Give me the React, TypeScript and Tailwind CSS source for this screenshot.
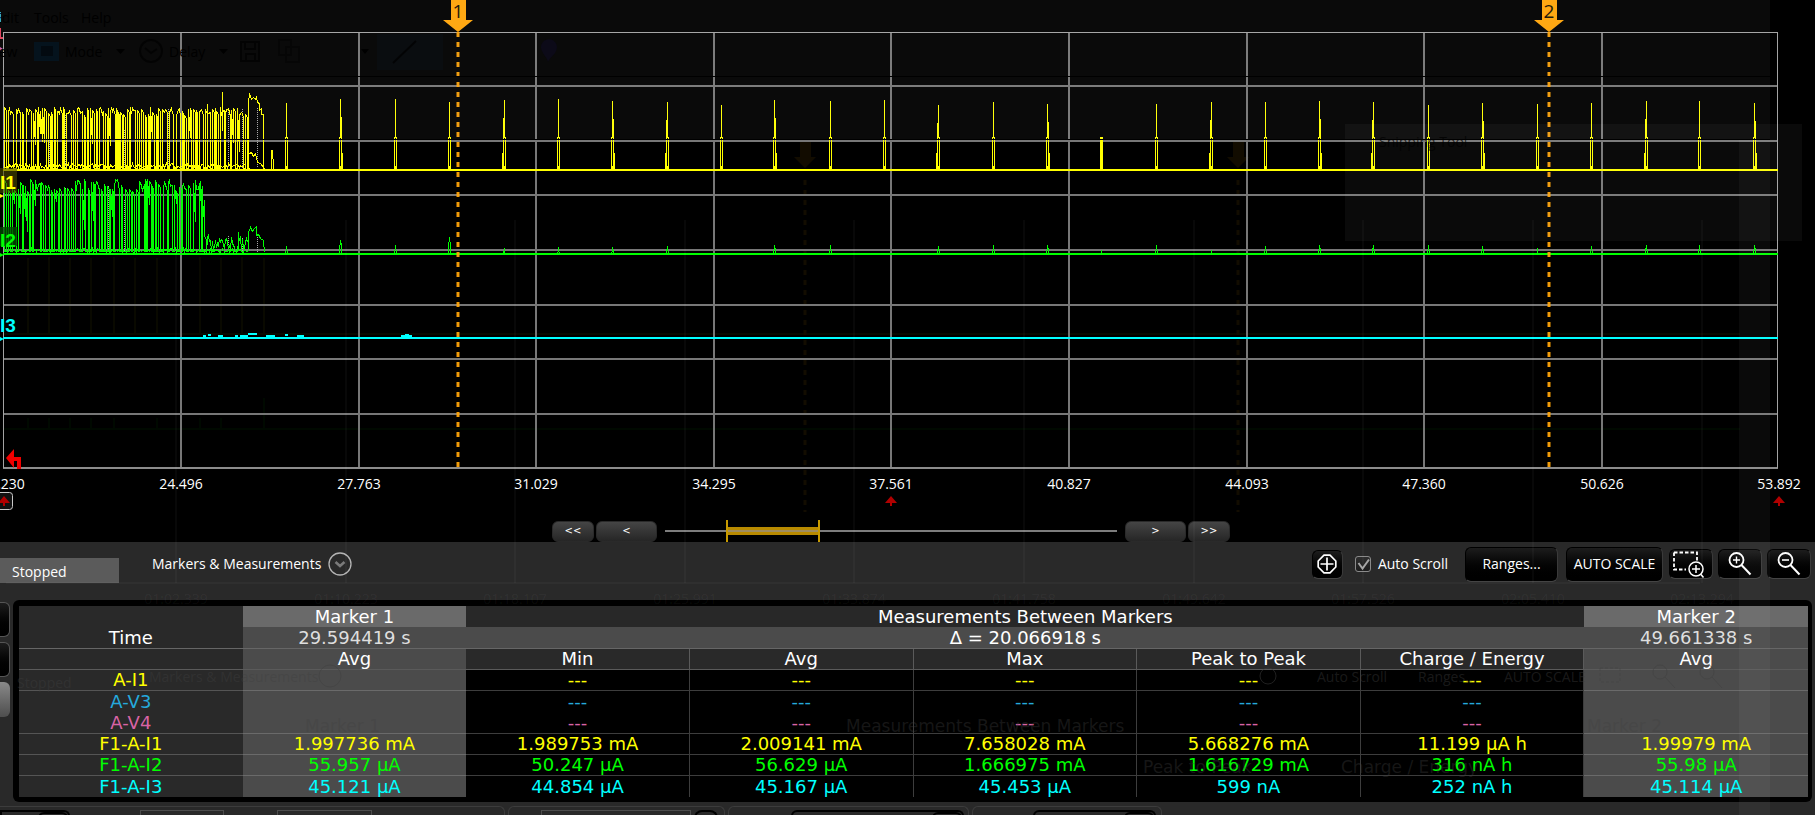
import type { ReactNode } from "react";

const AXIS = [
  [3, "21.230"],
  [181, "24.496"],
  [359, "27.763"],
  [536, "31.029"],
  [714, "34.295"],
  [891, "37.561"],
  [1069, "40.827"],
  [1247, "44.093"],
  [1424, "47.360"],
  [1602, "50.626"],
  [1779, "53.892"],
] as const;

const ROWS_Y = [86, 141, 195, 250, 305, 359, 414];

// x, top of the I1 spike, top of the I2 spike, side of the extra shoulder
const PULSES = [
  [286, 102, 245, 0],
  [340, 98, 239, 1],
  [395, 98, 244, 0],
  [449, 101, 236, 0],
  [504, 99, 247, -1],
  [558, 98, 246, 0],
  [612, 100, 246, 1],
  [667, 101, 245, -1],
  [721, 104, 252, 0],
  [774, 99, 244, 1],
  [830, 100, 244, 0],
  [884, 99, 252, 0],
  [938, 104, 245, -1],
  [993, 101, 244, 0],
  [1047, 103, 244, 1],
  [1101, 136, 249, 0],
  [1156, 103, 244, 0],
  [1211, 101, 249, -1],
  [1265, 101, 245, 0],
  [1319, 100, 244, 1],
  [1373, 101, 244, -1],
  [1428, 104, 244, 0],
  [1482, 102, 245, 1],
  [1537, 103, 247, 0],
  [1591, 102, 245, 0],
  [1646, 100, 244, -1],
  [1699, 100, 244, 0],
  [1754, 102, 244, 1],
];

function rng(seed: number) {
  let s = seed;
  return () => {
    s = (s * 16807) % 2147483647;
    return s / 2147483647;
  };
}

// active part of a trace: it flips between a high level and the base line
function burst(seed: number, from: number, to: number, top: number, base: number, spread: number) {
  const r = rng(seed);
  let d = `M${from} ${base}`;
  let x = from;
  while (x < to) {
    const hi = Math.round(top + r() * spread);
    d += ` V${hi}`;
    const k = r();
    if (k < 0.22) {
      for (let i = 0; i < 3; i++) {
        x += 1;
        d += ` L${x} ${Math.round(top + r() * spread)}`;
      }
    } else if (k < 0.4) {
      x += 2;
      d += ` L${x} ${Math.round(top + (base - top) * (0.3 + r() * 0.5))}`;
      continue;
    }
    x += 1 + Math.round(r());
    d += ` L${x} ${hi + 3} V${base}`;
    x += 1 + Math.round(r() * 1.7);
    d += ` H${x}`;
  }
  return d;
}

function floorNoise(seed: number, from: number, to: number, base: number, amp: number) {
  const r = rng(seed);
  let d = `M${from} ${base}`;
  for (let x = from; x < to; x += 1) d += ` L${x} ${Math.round(base - r() * amp)}`;
  return d;
}

const yellowPulses = PULSES.map(([x, t, , s]) => {
  const side = s ? `M${x + s} ${t + 18}V152M${x + s * 2} 152V169` : "";
  return `M${x} ${t}V137M${x - 1} 136V169M${x + 1} 136V169M${x} 165V169${side}`;
}).join("");

const greenPulses = PULSES.map(([x, , t, s]) => {
  const side = s ? `M${x + s} ${t + 3}V252` : "";
  const foot = Math.min(t + 5, 252);
  return `M${x} ${t}V${foot}M${x - 1} ${foot}V253M${x + 1} ${foot}V253${side}`;
}).join("");

function MarkerPin({ x, label }: { x: number; label: string }) {
  return (
    <g>
      <path d={`M${x} 32V468`} stroke="#ffa50a" strokeWidth="3" strokeDasharray="5 5" opacity="0.95" />
      <path d={`M${x - 7} 0h15v20h7L${x} 32L${x - 15} 20h8z`} fill="#ffa50a" />
      <text x={x} y="18" textAnchor="middle" fill="#1a1200" className="text-[19px]">
        {label}
      </text>
    </g>
  );
}

function Chart() {
  return (
    <svg viewBox="0 0 1815 512" className="block w-full font-['Open_Sans',sans-serif]" role="img" aria-label="Current traces">
      {/* afterglow of the earlier trace */}
      <g fill="none" stroke="#ffff00" opacity="0.07">
        <path d="M28 258V333M49 257V333M70 258V333M91 258V333M114 257V333M135 258V333M157 258V333M200 257V333M221 258V333M242 257V333M264 258V333M4 334H1740" />
        <path d="M28 418V428M49 418V428M70 418V428M91 418V428M114 418V428M157 418V428M200 418V428M221 418V428M264 398V428M4 429H1740" stroke="#00ff00" />
        <path d="M805 180V512M1238 180V512" stroke="#ffa50a" strokeWidth="3" strokeDasharray="5 5" />
        <path d="M800 140h11v17h5L805 168L794 157h6zM1233 140h11v17h5L1238 168L1227 157h6z" fill="#ffa50a" stroke="none" />
      </g>

      <g shapeRendering="crispEdges" fill="none" stroke="#777777" strokeWidth="2">
        {ROWS_Y.map((y) => (
          <path key={y} d={`M4 ${y}H1777`} />
        ))}
        {AXIS.slice(1, -1).map(([x]) => (
          <path key={x} d={`M${x} 33V468`} />
        ))}
        <path d="M3 468H1778" stroke="#8c8c8c" />
        <path d="M3.5 468V32.5H1777.5V468" stroke="#a3a3a3" strokeWidth="1" />
      </g>

      <g fill="none" stroke="#a8a8a8" strokeDasharray="1 1" shapeRendering="crispEdges">
        <path d="M4.5 127V168M49.5 140V168M65.5 115V168M108.5 112V168M124.5 130V168M168.5 109V168M182.5 125V168M228.5 110V168M242.5 109V168M257.5 108V168" />
        <path d="M4.5 190V252M49.5 220V252M65.5 188V252M108.5 186V252M124.5 200V252M168.5 186V252M182.5 190V252M228.5 236V252M242.5 238V252M257.5 235V252" />
      </g>

      <g shapeRendering="crispEdges" fill="none" stroke="#ffff00" strokeWidth="1" transform="translate(0.5 0.5)">
        <path d={burst(4211, 4, 246, 107, 168, 8)} />
        <path d={floorNoise(77, 4, 246, 168, 5)} />
        <path d="M207 103V168M222 91V130M215 107V168M248 168V102L249 93L251 99L253 97L255 99L256 96L257 102L259 103V110L261 108V114H263V168L264 168" />
        <path d="M249 153L251 152L253 156L255 153L257 162L260 163L263 167" />
        <path d="M271 149V168M272 149V158M273 158V168" />
        <path d={yellowPulses} />
        <path d="M1101 136V169" />
        <path d={burst(9137, 4, 202, 179, 251, 12)} stroke="#00ff00" />
        <path d={floorNoise(35, 4, 248, 252, 4)} stroke="#00ff00" />
        <path d={floorNoise(311, 206, 248, 252, 17)} stroke="#00ff00" />
        <path
          d="M200 180V200L202 186V222L204 200V235L206 240V252M238 231V250M248 250V232L250 227L252 231L254 228L256 226V235L258 234L260 238L263 240L264 252"
          stroke="#00ff00"
        />
        <path d={greenPulses} stroke="#00ff00" />
      </g>

      <g shapeRendering="crispEdges" fill="none" strokeWidth="2">
        <path d="M3 170H1778" stroke="#ffff00" />
        <path d="M3 254H1778" stroke="#00ff00" />
        <path d="M3 338H1778" stroke="#00ffff" />
        <path
          d="M203 336H206M208 335H211M218 336H223M235 336H238M240 336H248M248 334H257M266 336H275M285 335H288M297 336H304M401 336H412M405 335H409"
          stroke="#00ffff"
        />
      </g>

      <MarkerPin x={458} label="1" />
      <MarkerPin x={1549} label="2" />

      <g className="font-['Liberation_Sans',sans-serif] text-[19px] font-bold">
        <rect x="0" y="168" width="17" height="25" fill="#4a4a00" opacity="0.6" />
        <rect x="0" y="227" width="17" height="19" fill="#004a00" opacity="0.8" />
        <text x="0" y="189" fill="#ffff00">I1</text>
        <text x="0" y="247" fill="#00ff00">I2</text>
        <text x="0" y="332" fill="#00ffff">I3</text>
      </g>
      <path d="M0 194l4 2l-4 2z" fill="#ffff00" />
      <path d="M0 253l4 2l-4 2z" fill="#00ff00" />
      <path d="M0 337l4 2l-4 2z" fill="#00ffff" />
      <path d="M0 12h1v10h-1z" fill="#2fa8b8" />
      <path d="M0 28h1v9h2v2h-3z" fill="#e0405a" />
      <path d="M0 47l3 2l-3 2z" fill="#d062b0" />

      <path d="M6 458L14 449V457H21V469H17V461H14V468z" fill="#f00000" />

      <g fill="#ffffff" textAnchor="middle" className="text-[14px]">
        {AXIS.map(([x, label]) => (
          <text key={label} x={x} y="489">
            {label}
          </text>
        ))}
      </g>

      <rect x="-8" y="492.5" width="20.5" height="17" rx="3" fill="#111111" stroke="#c8c8c8" />
      {[4, 891, 1779].map((x) => (
        <path key={x} d={`M${x} 496L${x + 6} 503H${x + 1}V506H${x - 1}V503H${x - 6}z`} fill="#b00000" />
      ))}
    </svg>
  );
}

function StepButton({ wide, label, children }: { wide?: boolean; label: string; children: string }) {
  return (
    <button
      type="button"
      aria-label={label}
      className={`${wide ? "w-[61px]" : "w-[42px]"} h-[21px] rounded-md border border-[#2a2a2a] bg-linear-to-b from-[#454545] to-[#262626] font-['DejaVu_Sans',sans-serif] text-[10px] leading-none text-white`}
    >
      {children}
    </button>
  );
}

function ScrollRow() {
  return (
    <div className="flex h-[30px] items-center justify-center gap-0.5 pt-2 pr-[33px]">
      <StepButton label="Page back">{"<<"}</StepButton>
      <StepButton label="Back" wide>{"<"}</StepButton>
      <input
        type="range"
        aria-label="Visible time span"
        defaultValue={17}
        className="mx-1.5 h-[22px] w-[452px] appearance-none bg-[linear-gradient(to_bottom,transparent_10px,#7d7d7d_10px,#7d7d7d_12px,transparent_12px)] [&::-webkit-slider-thumb]:h-[22px] [&::-webkit-slider-thumb]:w-[94px] [&::-webkit-slider-thumb]:appearance-none [&::-webkit-slider-thumb]:border-x-2 [&::-webkit-slider-thumb]:border-[#c79a00] [&::-webkit-slider-thumb]:bg-[linear-gradient(to_bottom,transparent_7px,#b88a00_7px,#b88a00_10px,#a08d60_10px,#a08d60_12px,#b88a00_12px,#b88a00_15px,transparent_15px)]"
      />
      <StepButton label="Forward" wide>{">"}</StepButton>
      <StepButton label="Page forward">{">>"}</StepButton>
    </div>
  );
}

const toolButton =
  "flex shrink-0 items-center justify-center rounded-md border border-t-black border-r-[#3a3a3a] border-b-[#444444] border-l-black bg-linear-to-b from-[#1d1d1d] to-black text-white";

function IconButton({ label, children }: { label: string; children: ReactNode }) {
  return (
    <button type="button" aria-label={label} className={`${toolButton} h-[30px] w-11`}>
      {children}
    </button>
  );
}

function Toolbar() {
  return (
    <div className="flex h-11 items-center">
      <div className="mt-4 flex h-[25px] w-[119px] items-center self-start bg-[#5b5b5b] pt-0.5 pl-3">Stopped</div>
      <button type="button" className="ml-[33px] flex items-center gap-[7px]">
        Markers &amp; Measurements
        <svg width="24" height="24" viewBox="0 0 24 24" fill="none">
          <circle cx="12" cy="12" r="11" stroke="#b4b4b4" strokeWidth="1.3" />
          <path d="M7.5 10l4.5 4l4.5-4" stroke="#7a7a7a" strokeWidth="2.5" />
        </svg>
      </button>

      <div className="ml-auto flex items-center pr-1">
        <button type="button" aria-label="Center" className={`${toolButton} mr-3 h-[29px] w-[31px]`}>
          <svg width="20" height="20" viewBox="0 0 20 20" fill="none" stroke="#ffffff">
            <path d="M7 1.2h6L18.8 7v6L13 18.8H7L1.2 13V7z" strokeWidth="1.7" strokeLinejoin="round" />
            <path d="M10 3.5v13M3.5 10h13" strokeWidth="1.7" />
          </svg>
        </button>
        <label className="mr-[17px] flex items-center gap-[7px]">
          <span className="relative block size-4">
            <input
              type="checkbox"
              defaultChecked
              className="peer block size-4 appearance-none rounded-[3px] border border-[#8a8a8a] bg-linear-to-b from-[#2e2e2e] to-[#1c1c1c]"
            />
            <svg
              viewBox="0 0 16 16"
              className="pointer-events-none absolute inset-0 hidden peer-checked:block"
              fill="none"
              stroke="#a5a5a5"
              strokeWidth="2"
            >
              <path d="M3.5 7l4 5.5L14 3.5" />
            </svg>
          </span>
          Auto Scroll
        </label>
        <button type="button" className={`${toolButton} mr-2 h-[35px] w-[93px]`}>
          Ranges...
        </button>
        <button type="button" className={`${toolButton} mr-1.5 h-[35px] w-[97px] whitespace-nowrap`}>
          AUTO SCALE
        </button>
        <div className="flex gap-[5px]">
          <IconButton label="Zoom to area">
            <svg width="38" height="28" viewBox="1 0 36 28" fill="none" stroke="#ffffff">
              <path d="M2 2.5H25V12M2 2.5V19.5H14" strokeWidth="1.8" strokeDasharray="3.5 2" />
              <circle cx="24" cy="19" r="7" strokeWidth="1.5" />
              <path d="M24 15v8M20 19h8M28.5 24l3 3.5" strokeWidth="1.5" />
            </svg>
          </IconButton>
          <IconButton label="Zoom in">
            <svg width="28" height="26" viewBox="0 0 28 26" fill="none" stroke="#ffffff">
              <circle cx="10.5" cy="9" r="7" strokeWidth="1.8" />
              <path d="M10.5 5.5v7M7 9h7" strokeWidth="1.4" />
              <path d="M15.5 14l9 9.5" strokeWidth="2" />
            </svg>
          </IconButton>
          <IconButton label="Zoom out">
            <svg width="28" height="26" viewBox="0 0 28 26" fill="none" stroke="#ffffff">
              <circle cx="10.5" cy="9" r="7" strokeWidth="1.8" />
              <path d="M7 9h7" strokeWidth="1.6" />
              <path d="M15.5 14l9 9.5" strokeWidth="2" />
            </svg>
          </IconButton>
        </div>
      </div>
    </div>
  );
}

const DATA = [
  { name: "A-I1", color: "text-[#ffff00]", row: "[&>*]:h-[21px] [&>*]:border-b", m1: "", m2: "", vals: ["---", "---", "---", "---", "---"] },
  { name: "A-V3", color: "text-[#25a9dc]", row: "[&>*]:h-[21px]", m1: "", m2: "", vals: ["---", "---", "---", "---", "---"] },
  { name: "A-V4", color: "text-[#d863a5]", row: "[&>*]:h-[22px] [&>*]:border-b", m1: "", m2: "", vals: ["---", "---", "---", "---", "---"] },
  {
    name: "F1-A-I1",
    color: "text-[#ffff00]",
    row: "[&>*]:h-[21px] [&>*]:border-b",
    m1: "1.997736 mA",
    m2: "1.99979 mA",
    vals: ["1.989753 mA", "2.009141 mA", "7.658028 mA", "5.668276 mA", "11.199 µA h"],
  },
  {
    name: "F1-A-I2",
    color: "text-[#00ff00]",
    row: "[&>*]:h-[21px] [&>*]:border-b",
    m1: "55.957 µA",
    m2: "55.98 µA",
    vals: ["50.247 µA", "56.629 µA", "1.666975 mA", "1.616729 mA", "316 nA h"],
  },
  {
    name: "F1-A-I3",
    color: "text-[#00ffff]",
    row: "[&>*]:h-[21px]",
    m1: "45.121 µA",
    m2: "45.114 µA",
    vals: ["44.854 µA", "45.167 µA", "45.453 µA", "599 nA", "252 nA h"],
  },
];

function MeasurementTable() {
  return (
    <table className="w-full table-fixed border-separate border-spacing-0 text-center font-['DejaVu_Sans',sans-serif] text-[18px] leading-5 [&_td]:p-0 [&_th]:p-0 [&_th]:font-normal">
      <thead>
        <tr className="[&>*]:h-[21px]">
          <td className="bg-[#292929]" />
          <th scope="col" className="bg-[#6a6a6a]">Marker 1</th>
          <th scope="colgroup" colSpan={5} className="bg-[#282828]">Measurements Between Markers</th>
          <th scope="col" className="bg-[#6a6a6a]">Marker 2</th>
        </tr>
        <tr className="[&>*]:h-[22px] [&>*]:border-b [&>*]:border-[#666666]">
          <th scope="row" className="bg-[#292929]">Time</th>
          <td className="bg-[#4b4b4b] text-[#dedede]">29.594419 s</td>
          <td colSpan={5} className="bg-[#4b4b4b]">Δ = 20.066918 s</td>
          <td className="bg-[#4b4b4b] text-[#dedede]">49.661338 s</td>
        </tr>
        <tr className="[&>*]:h-[21px] [&>*]:border-b [&>*]:border-[#5a5a5a]">
          <td className="bg-[#292929]" />
          <th scope="col" className="bg-[#4b4b4b]">Avg</th>
          {["Min", "Avg", "Max", "Peak to Peak", "Charge / Energy"].map((h) => (
            <th key={h} scope="col" className="border-r bg-[#292929]">{h}</th>
          ))}
          <th scope="col" className="bg-[#4b4b4b]">Avg</th>
        </tr>
      </thead>
      <tbody>
        {DATA.map((row) => (
          <tr key={row.name} className={`${row.color} ${row.row}`}>
            <th scope="row" className="border-[#555555] bg-[#292929]">{row.name}</th>
            <td className="border-[#6a6a6a] bg-[#4b4b4b]">{row.m1}</td>
            {row.vals.map((v, i) => (
              <td key={i} className="border-r border-[#3d3d3d] bg-black">{v}</td>
            ))}
            <td className="border-[#6a6a6a] bg-[#4b4b4b]">{row.m2}</td>
          </tr>
        ))}
      </tbody>
    </table>
  );
}

function SideStubs() {
  return (
    <div className="flex w-[13px] shrink-0 flex-col gap-[5px] pt-0.5">
      <div className="h-[35px] w-[10px] rounded-r-md border border-l-0 border-[#555555] bg-linear-to-b from-[#1d1d1d] to-black" />
      <div className="h-[35px] w-[10px] rounded-r-md border border-l-0 border-[#555555] bg-linear-to-b from-[#1d1d1d] to-black" />
      <div className="h-[35px] w-[10px] rounded-r-md bg-linear-to-b from-[#8a8a8a] to-[#4e4e4e]" />
    </div>
  );
}

const group = "flex h-5 rounded-t-md border border-b-0 border-[#3c3c3c] pt-[3px]";
const dropdown = "flex justify-end rounded-t-md border-2 border-b-0 border-black";
const knob = "w-[30px] rounded-t-md border-2 border-b-0 border-black";

// upper edge of the channel strip below the table
function ChannelStrip() {
  return (
    <div className="mt-1 flex h-[9px] gap-[3px] overflow-hidden">
      <div className={`${group} -ml-px w-[506px] rounded-tl-none`}>
        <div className={`${dropdown} w-[70px] rounded-tl-none`}>
          <div className={knob} />
        </div>
        <div className="ml-[70px] w-[84px] border border-b-0 border-[#4c4c4c]" />
        <div className="ml-[53px] w-[95px] border border-b-0 border-[#4c4c4c]" />
      </div>
      <div className={`${group} w-[217px]`}>
        <div className="ml-8 w-[150px] border border-b-0 border-[#4c4c4c]" />
        <div className="ml-[3px] w-[24px] rounded-t-lg border-2 border-b-0 border-black" />
      </div>
      <div className={`${group} w-[241px]`}>
        <div className={`${dropdown} ml-[62px] w-[173px]`}>
          <div className={knob} />
        </div>
      </div>
      <div className={`${group} w-[190px]`}>
        <div className={`${dropdown} ml-[60px] w-[123px]`}>
          <div className={knob} />
        </div>
      </div>
    </div>
  );
}

const GHOST_TIMES = [
  [176, "01:02.339"],
  [346, "01:10.223"],
  [515, "01:18.107"],
  [685, "01:25.991"],
  [854, "01:33.874"],
  [1024, "01:41.758"],
  [1194, "01:49.642"],
  [1363, "01:57.526"],
  [1533, "02:05.410"],
  [1702, "02:13.294"],
] as const;

// dim windows that shine through the instrument display
function Afterimage() {
  return (
    <div aria-hidden="true" className="pointer-events-none absolute inset-0 overflow-hidden">
      <div className="absolute inset-x-0 top-0 mr-[45px] h-[139px] bg-white/4" />
      <div className="absolute top-[124px] right-[13px] h-[117px] w-[457px] bg-white/4" />
      <div className="absolute top-[139px] right-[45px] bottom-0 w-[31px] bg-white/4" />

      <svg viewBox="0 0 1815 815" className="absolute inset-x-0 top-0 w-full font-['Open_Sans',sans-serif] text-[14px]" fill="none">
        <g stroke="#000000">
          <path d="M0 76.5H1770" />
          <path d="M0 139.5H1770" />
        </g>
        <g fill="#000000">
          <text x="-6" y="23">Edit</text>
          <text x="34" y="23">Tools</text>
          <text x="81" y="23">Help</text>
          <text x="-12" y="57">New</text>
          <text x="65" y="57">Mode</text>
          <text x="169" y="57">Delay</text>
          <path d="M116 49h9l-4.500 5zM219 49h9l-4.500 5zM361 49h8l-4 5zM431 49h8l-4 5z" />
          <text x="1379" y="147" fillOpacity="0.7">Snipping Tool</text>
        </g>
        <rect x="34" y="42" width="25" height="19" fill="#05131d" />
        <rect x="41" y="46" width="12" height="10" fill="#030a10" />
        <rect x="377" y="34" width="66" height="36" fill="#0a0d10" />
        <g stroke="#000000" strokeOpacity="0.7" strokeWidth="2">
          <circle cx="151" cy="51" r="11" />
          <path d="M145 48l6 5l6-4" />
          <path d="M241 42h18v19h-18zM245 42v7h10v-7M246 61v-7h9v7" />
          <path d="M279 40h12v15h-12zM286 47h13v15h-13z" strokeOpacity="0.4" />
          <path d="M393 63L416 41" />
        </g>
        <path d="M541 48a8 8 0 1 1 15 3c-2 5-6 6-8 11c-1-5-6-8-7-14z" fill="#0c0a18" />

        <g stroke="#ffffff" strokeOpacity="0.03" strokeWidth="2">
          {GHOST_TIMES.map(([x]) => (
            <path key={x} d={`M${x} 220V583`} />
          ))}
          <path d="M6 583H1700" />
        </g>
        <g fill="#ffffff" fillOpacity="0.05" textAnchor="middle">
          {GHOST_TIMES.map(([x, label]) => (
            <text key={label} x={x} y="604">
              {label}
            </text>
          ))}
        </g>

        <g fill="#404040" fillOpacity="0.4">
          <text x="17" y="688">Stopped</text>
          <text x="149" y="682">Markers &amp; Measurements</text>
          <text x="1317" y="682">Auto Scroll</text>
          <text x="1418" y="682">Ranges...</text>
          <text x="1504" y="682">AUTO SCALE</text>
        </g>
        <g fill="#404040" fillOpacity="0.35" className="font-['DejaVu_Sans',sans-serif] text-[17px]">
          <text x="305" y="732">Marker 1</text>
          <text x="846" y="732">Measurements Between Markers</text>
          <text x="1587" y="732">Marker 2</text>
          <text x="1143" y="773">Peak to Peak</text>
          <text x="1341" y="773">Charge / Energy</text>
        </g>
        <g stroke="#404040" strokeOpacity="0.5">
          <circle cx="330" cy="676" r="11" />
          <circle cx="1268" cy="676" r="8" />
          <path d="M1600 668h20v14h-20z" strokeDasharray="3 2" />
          <circle cx="1660" cy="672" r="7" />
          <circle cx="1707" cy="672" r="7" />
          <path d="M1665 677l10 11M1712 677l10 11" />
        </g>
      </svg>
    </div>
  );
}

export default function App() {
  return (
    <div className="relative min-h-screen overflow-hidden bg-[#292929] font-['Open_Sans',sans-serif] text-[14px] leading-5 text-white">
      <div className="bg-black">
        <Chart />
        <ScrollRow />
      </div>
      <Toolbar />
      <div className="mt-3.5 flex">
        <SideStubs />
        <div className="mr-[3px] min-w-0 flex-1 rounded-md bg-black pt-1.5 pr-1 pb-[5px] pl-1.5">
          <MeasurementTable />
        </div>
      </div>
      <ChannelStrip />
      <Afterimage />
    </div>
  );
}
